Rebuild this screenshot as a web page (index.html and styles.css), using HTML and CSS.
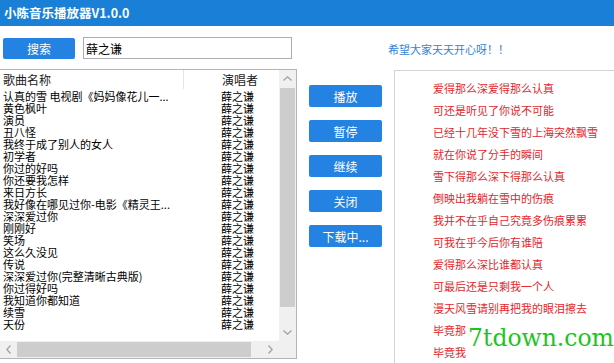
FILE: index.html
```html
<!DOCTYPE html>
<html lang="zh-CN">
<head>
    <meta charset="UTF-8">
    <title>小陈音乐播放器V1.0.0</title>
    <link rel="stylesheet" href="styles.css">
</head>
<body>
    <div class="titlebar">小陈音乐播放器V1.0.0</div>

    <div class="main">
        <div class="search-row">
            <button class="btn search-btn">搜索</button>
            <input class="search-input" type="text" value="薛之谦">
        </div>
        <div></div>
        <div class="slogan">希望大家天天开心呀！！</div>

        <div class="listbox">
            <div class="list-content">
                <div class="list-header">
                    <div class="col-name">歌曲名称</div>
                    <div class="col-singer">演唱者</div>
                </div>
                <div class="list-rows" id="rows"></div>
            </div>
            <div class="vscroll">
                <div class="arrow">
                    <svg width="9" height="5" viewBox="0 0 9 5"><polyline points="0.5,4.5 4.5,0.8 8.5,4.5" fill="none" stroke="#a0a0a0" stroke-width="1.2"/></svg>
                </div>
                <div class="vthumb"></div>
                <div class="arrow arrow-down">
                    <svg width="9" height="5" viewBox="0 0 9 5"><polyline points="0.5,0.5 4.5,4.2 8.5,0.5" fill="none" stroke="#a0a0a0" stroke-width="1.2"/></svg>
                </div>
            </div>
            <div class="hscroll">
                <div class="harrow">
                    <svg width="5" height="9" viewBox="0 0 5 9"><polyline points="4.5,0.5 0.8,4.5 4.5,8.5" fill="none" stroke="#a0a0a0" stroke-width="1.2"/></svg>
                </div>
                <div class="hthumb"></div>
                <div class="harrow harrow-right">
                    <svg width="5" height="9" viewBox="0 0 5 9"><polyline points="0.5,0.5 4.2,4.5 0.5,8.5" fill="none" stroke="#a0a0a0" stroke-width="1.2"/></svg>
                </div>
            </div>
            <div class="corner"></div>
        </div>

        <div class="buttons">
            <button class="btn">播放</button>
            <button class="btn">暂停</button>
            <button class="btn">继续</button>
            <button class="btn">关闭</button>
            <button class="btn">下载中...</button>
        </div>

        <div class="lyrics">
            <p>爱得那么深爱得那么认真</p>
            <p>可还是听见了你说不可能</p>
            <p>已经十几年没下雪的上海突然飘雪</p>
            <p>就在你说了分手的瞬间</p>
            <p>雪下得那么深下得那么认真</p>
            <p>倒映出我躺在雪中的伤痕</p>
            <p>我并不在乎自己究竟多伤痕累累</p>
            <p>可我在乎今后你有谁陪</p>
            <p>爱得那么深比谁都认真</p>
            <p>可最后还是只剩我一个人</p>
            <p>漫天风雪请别再把我的眼泪擦去</p>
            <p>毕竟那</p>
            <p>毕竟我</p>
            <div class="watermark">7tdown.com</div>
        </div>
    </div>

    <script>
        const songs = [
            "认真的雪 电视剧《妈妈像花儿一...",
            "黄色枫叶",
            "演员",
            "丑八怪",
            "我终于成了别人的女人",
            "初学者",
            "你过的好吗",
            "你还要我怎样",
            "来日方长",
            "我好像在哪见过你-电影《精灵王...",
            "深深爱过你",
            "刚刚好",
            "笑场",
            "这么久没见",
            "传说",
            "深深爱过你(完整清晰古典版)",
            "你过得好吗",
            "我知道你都知道",
            "续雪",
            "天份"
        ];

        const rows = document.getElementById('rows');
        songs.forEach(name => {
            const row = document.createElement('div');
            row.className = 'row';
            row.innerHTML = `<span class="col-name">${name}</span><span class="col-singer">薛之谦</span>`;
            rows.appendChild(row);
        });
    </script>
</body>
</html>
```

FILE: styles.css
```css
body {
    margin: 0;
    padding: 0;
    background-color: #ffffff;
    font-family: "Noto Sans CJK SC", "Noto Sans", sans-serif;
    overflow: hidden;
}
.titlebar {
    height: 26px;
    line-height: 25px;
    background-color: #1a7fd6;
    color: #ffffff;
    font-size: 12.5px;
    font-weight: bold;
    padding-left: 4px;
}
.main {
    display: grid;
    grid-template-columns: 297px 91px 1fr;
    grid-template-rows: 43px 294px;
    height: 337px;
    overflow: hidden;
}
.btn {
    display: block;
    height: 22px;
    padding: 0;
    border: none;
    border-radius: 2px;
    background-color: #2382e2;
    color: #ffffff;
    font-family: "Noto Sans CJK SC", sans-serif;
    font-size: 12px;
}
.search-row {
    display: flex;
    align-items: center;
    padding: 11px 0 0 3px;
    align-self: start;
}
.search-btn {
    width: 72px;
    height: 21px;
}
.search-input {
    margin-left: 8px;
    width: 209px;
    height: 22px;
    box-sizing: border-box;
    border: 1px solid #abadb3;
    padding: 0 2px;
    font-family: "Noto Sans CJK SC", sans-serif;
    font-size: 12px;
    color: #000000;
    outline: none;
}
.slogan {
    padding-top: 15px;
    font-size: 11px;
    color: #3583d6;
}

/* song list */
.listbox {
    border: 1px solid #b4b4b4;
    border-left: none;
    height: 290px;
    box-sizing: border-box;
    display: grid;
    grid-template-columns: 1fr 17px;
    grid-template-rows: 1fr 17px;
}
.list-content {
    overflow: hidden;
}
.list-header {
    display: flex;
    height: 19px;
    line-height: 19px;
    font-size: 12px;
    color: #1a1a1a;
}
.list-header .col-name {
    width: 180px;
    padding-left: 3px;
    border-right: 1px solid #e5e5e5;
}
.col-singer {
    padding-left: 38px;
}
.list-rows {
    padding-top: 1px;
}
.row {
    display: flex;
    height: 12px;
    line-height: 12px;
    font-size: 11px;
    color: #000000;
    white-space: nowrap;
}
.row .col-name {
    width: 183px;
    padding-left: 3px;
    box-sizing: border-box;
}
.vscroll {
    background-color: #f0f0f0;
    display: flex;
    flex-direction: column;
}
.arrow {
    height: 17px;
    display: flex;
    align-items: center;
    justify-content: center;
}
.arrow-down {
    margin-top: auto;
}
.vthumb {
    margin: 1px 1px 0;
    height: 219px;
    background-color: #cdcdcd;
}
.hscroll {
    background-color: #f0f0f0;
    display: flex;
    align-items: stretch;
}
.harrow {
    width: 17px;
    display: flex;
    align-items: center;
    justify-content: center;
}
.harrow-right {
    margin-left: auto;
}
.hthumb {
    margin: 1px 0;
    width: 234px;
    background-color: #cdcdcd;
}
.corner {
    background-color: #f0f0f0;
}

/* buttons */
.buttons {
    display: flex;
    flex-direction: column;
    gap: 13px;
    padding: 16px 0 0 12px;
}
.buttons .btn {
    width: 73px;
}

/* lyrics */
.lyrics {
    position: relative;
    margin-left: 6px;
    margin-top: 1px;
    height: 293px;
    box-sizing: border-box;
    border-left: 1px solid #d4d4d4;
    border-top: 1px solid #d4d4d4;
    padding: 6px 0 0 38px;
    overflow: hidden;
}
.lyrics p {
    margin: 0;
    height: 22px;
    line-height: 22px;
    font-size: 11px;
    color: #e3262b;
    white-space: nowrap;
}
.watermark {
    position: absolute;
    left: 71px;
    top: 252px;
    font-family: "DejaVu Serif", serif;
    font-size: 23.5px;
    line-height: 30px;
    color: #1ec41e;
    background-color: #ffffff;
    padding: 0 2px;
}
```
